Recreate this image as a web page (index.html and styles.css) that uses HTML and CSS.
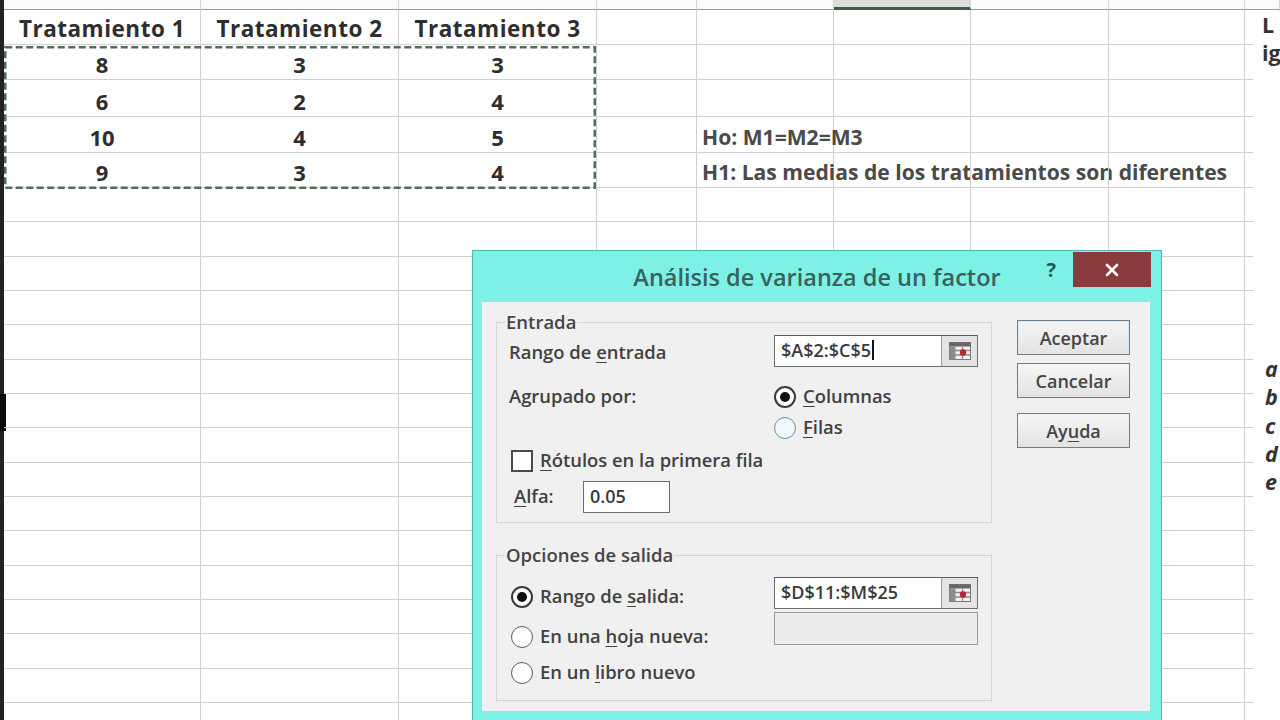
FILE: index.html
```html
<!DOCTYPE html>
<html lang="es">
<head>
<meta charset="utf-8">
<title>Análisis de varianza de un factor</title>
<link rel="stylesheet" href="styles.css">
</head>
<body>
<div class="sheet">
  <div class="edge"><div class="edge-mark"></div></div>
  <div class="grid">
    <!-- column headers -->
    <div class="h"></div><div class="h"></div><div class="h"></div><div class="h"></div><div class="h"></div><div class="h sel"></div><div class="h"></div><div class="h"></div><div class="h"></div>
    <!-- row 1 -->
    <div class="c b">Tratamiento 1</div><div class="c b">Tratamiento 2</div><div class="c b">Tratamiento 3</div><div class="c"></div><div class="c"></div><div class="c"></div><div class="c"></div><div class="c"></div><div class="c"></div>
    <!-- row 2 -->
    <div class="c b">8</div><div class="c b">3</div><div class="c b">3</div><div class="c"></div><div class="c"></div><div class="c"></div><div class="c"></div><div class="c"></div><div class="c"></div>
    <!-- row 3 -->
    <div class="c b">6</div><div class="c b">2</div><div class="c b">4</div><div class="c"></div><div class="c"></div><div class="c"></div><div class="c"></div><div class="c"></div><div class="c"></div>
    <!-- row 4 -->
    <div class="c b">10</div><div class="c b">4</div><div class="c b">5</div><div class="c"></div><div class="c t">Ho: M1=M2=M3</div><div class="c"></div><div class="c"></div><div class="c"></div><div class="c"></div>
    <!-- row 5 -->
    <div class="c b">9</div><div class="c b">3</div><div class="c b">4</div><div class="c"></div><div class="c t">H1: Las medias de los tratamientos son diferentes</div><div class="c"></div><div class="c"></div><div class="c"></div><div class="c"></div>
    <!-- empty rows -->
    <div class="c"></div><div class="c"></div><div class="c"></div><div class="c"></div><div class="c"></div><div class="c"></div><div class="c"></div><div class="c"></div><div class="c"></div>
    <div class="c"></div><div class="c"></div><div class="c"></div><div class="c"></div><div class="c"></div><div class="c"></div><div class="c"></div><div class="c"></div><div class="c"></div>
    <div class="c"></div><div class="c"></div><div class="c"></div><div class="c"></div><div class="c"></div><div class="c"></div><div class="c"></div><div class="c"></div><div class="c"></div>
    <div class="c"></div><div class="c"></div><div class="c"></div><div class="c"></div><div class="c"></div><div class="c"></div><div class="c"></div><div class="c"></div><div class="c"></div>
    <div class="c"></div><div class="c"></div><div class="c"></div><div class="c"></div><div class="c"></div><div class="c"></div><div class="c"></div><div class="c"></div><div class="c"></div>
    <div class="c"></div><div class="c"></div><div class="c"></div><div class="c"></div><div class="c"></div><div class="c"></div><div class="c"></div><div class="c"></div><div class="c"></div>
    <div class="c"></div><div class="c"></div><div class="c"></div><div class="c"></div><div class="c"></div><div class="c"></div><div class="c"></div><div class="c"></div><div class="c"></div>
    <div class="c"></div><div class="c"></div><div class="c"></div><div class="c"></div><div class="c"></div><div class="c"></div><div class="c"></div><div class="c"></div><div class="c"></div>
    <div class="c"></div><div class="c"></div><div class="c"></div><div class="c"></div><div class="c"></div><div class="c"></div><div class="c"></div><div class="c"></div><div class="c"></div>
    <div class="c"></div><div class="c"></div><div class="c"></div><div class="c"></div><div class="c"></div><div class="c"></div><div class="c"></div><div class="c"></div><div class="c"></div>
    <div class="c"></div><div class="c"></div><div class="c"></div><div class="c"></div><div class="c"></div><div class="c"></div><div class="c"></div><div class="c"></div><div class="c"></div>
    <div class="c"></div><div class="c"></div><div class="c"></div><div class="c"></div><div class="c"></div><div class="c"></div><div class="c"></div><div class="c"></div><div class="c"></div>
    <div class="c"></div><div class="c"></div><div class="c"></div><div class="c"></div><div class="c"></div><div class="c"></div><div class="c"></div><div class="c"></div><div class="c"></div>
    <div class="c"></div><div class="c"></div><div class="c"></div><div class="c"></div><div class="c"></div><div class="c"></div><div class="c"></div><div class="c"></div><div class="c"></div>
    <div class="c"></div><div class="c"></div><div class="c"></div><div class="c"></div><div class="c"></div><div class="c"></div><div class="c"></div><div class="c"></div><div class="c"></div>
    <div class="c"></div><div class="c"></div><div class="c"></div><div class="c"></div><div class="c"></div><div class="c"></div><div class="c"></div><div class="c"></div><div class="c"></div>
  </div>

  <!-- copy marquee around the data range -->
  <svg class="marquee" width="592" height="143" viewBox="0 0 592 143">
    <rect x="1.25" y="1.25" width="589.5" height="140.5" fill="none" stroke="#4f6d5b" stroke-width="2.5" stroke-dasharray="7 3.5"/>
  </svg>

  <!-- text box at the right edge -->
  <div class="note">
    <p class="note-head">L<br>ig</p>
    <ol class="note-list"><li>a</li><li>b</li><li>c</li><li>d</li><li>e</li></ol>
  </div>

  <!-- dialog -->
  <div class="dialog">
    <div class="titlebar">
      <div class="tb-side"></div>
      <div class="title">Análisis de varianza de un factor</div>
      <div class="tb-side tb-right">
        <span class="help">?</span>
        <span class="close"><svg width="16" height="16" viewBox="0 0 16 16"><path d="M3 3L13 13M13 3L3 13" stroke="#fff" stroke-width="2.6" stroke-linecap="round"/></svg></span>
      </div>
    </div>
    <div class="panel">
      <div class="groups">
        <fieldset class="group g1">
          <legend>Entrada</legend>
          <div class="frow r1">
            <span class="lbl">Rango de <u>e</u>ntrada</span>
            <div class="refedit"><span class="val">$A$2:$C$5<i class="caret"></i></span><span class="refbtn"><svg width="24" height="20" viewBox="0 0 24 20"><rect x="1.5" y="1.5" width="21" height="17" fill="#f2f2f2" stroke="#777"/><rect x="1.5" y="1.5" width="21" height="4" fill="#666"/><rect x="1.5" y="5.5" width="6" height="13" fill="#8c8c8c"/><path d="M1.5 9.5H22.5M1.5 14H22.5M14.5 5.5V18.5" stroke="#8a8a8a" stroke-width="1.3"/><circle cx="15" cy="11.5" r="3.2" fill="#c3232e"/></svg></span></div>
          </div>
          <div class="frow r2">
            <span class="lbl">Agrupado por:</span>
            <span class="opt"><i class="radio on"></i><span><u>C</u>olumnas</span></span>
          </div>
          <div class="frow r3">
            <span class="lbl"></span>
            <span class="opt"><i class="radio hover"></i><span><u>F</u>ilas</span></span>
          </div>
          <div class="frow r4">
            <span class="opt"><i class="check"></i><span><u>R</u>ótulos en la primera fila</span></span>
          </div>
          <div class="frow r5">
            <span class="lbl alfa"><u>A</u>lfa:</span>
            <span class="input alfa-in">0.05</span>
          </div>
        </fieldset>

        <fieldset class="group g2">
          <legend>Opciones de salida</legend>
          <div class="outrow">
            <div class="opts">
              <span class="opt o1"><i class="radio on"></i><span>Rango de <u>s</u>alida:</span></span>
              <span class="opt o2"><i class="radio"></i><span>En una <u>h</u>oja nueva:</span></span>
              <span class="opt o3"><i class="radio"></i><span>En un <u>l</u>ibro nuevo</span></span>
            </div>
            <div class="outs">
              <div class="refedit"><span class="val">$D$11:$M$25</span><span class="refbtn"><svg width="24" height="20" viewBox="0 0 24 20"><rect x="1.5" y="1.5" width="21" height="17" fill="#f2f2f2" stroke="#777"/><rect x="1.5" y="1.5" width="21" height="4" fill="#666"/><rect x="1.5" y="5.5" width="6" height="13" fill="#8c8c8c"/><path d="M1.5 9.5H22.5M1.5 14H22.5M14.5 5.5V18.5" stroke="#8a8a8a" stroke-width="1.3"/><circle cx="15" cy="11.5" r="3.2" fill="#c3232e"/></svg></span></div>
              <div class="input disabled"></div>
            </div>
          </div>
        </fieldset>
      </div>
      <div class="buttons">
        <button class="btn default">Aceptar</button>
        <button class="btn">Cancelar</button>
        <button class="btn help-btn">Ay<u>u</u>da</button>
      </div>
    </div>
  </div>
</div>
</body>
</html>
```

FILE: styles.css
```css
html, body {
  margin: 0;
  padding: 0;
}
body {
  width: 1280px;
  height: 720px;
  overflow: hidden;
  background: #ffffff;
  font-family: "Open Sans", "Noto Sans", sans-serif;
}

.sheet {
  position: relative;
  display: flex;
  width: 1280px;
  height: 720px;
}

.edge {
  flex: none;
  width: 4px;
  background: #222;
  display: flex;
  flex-direction: column;
}
.edge-mark {
  margin-top: 394px;
  width: 6px;
  height: 37px;
  background: #0a0a0a;
}

.grid {
  flex: 1;
  display: grid;
  grid-template-columns: 197px 198px 198px 100px 137px 137px 138px 136px 1fr;
  grid-template-rows: 10px 35px 35px 37px 36px 35px repeat(16, 34.35px);
}

.h {
  border-right: 1px solid #d6d6d6;
  border-bottom: 1px solid #9a9a9a;
  background: #fbfbfb;
}
.h.sel {
  background: #dcdcdc;
  border-bottom: 3px solid #3e5e49;
}

.c {
  border-right: 1px solid #d0d0d0;
  border-bottom: 1px solid #d0d0d0;
  display: flex;
  align-items: flex-end;
  justify-content: center;
  padding-bottom: 1px;
  white-space: nowrap;
  min-width: 0;
}
.c.b {
  font-weight: 700;
  font-size: 22px;
  color: #2e2e2e;
  line-height: 28px;
}
.c.b:nth-child(-n+13) {
  font-size: 22.5px;
  letter-spacing: 0.5px;
}
.c.t {
  justify-content: flex-start;
  padding-left: 5px;
  font-weight: 700;
  font-size: 21.1px;
  line-height: 28px;
  color: #4a4a4a;
  overflow: visible;
}

.marquee {
  position: absolute;
  left: 4px;
  top: 46px;
}

.note {
  position: absolute;
  left: 1253px;
  top: 11px;
  right: 0;
  bottom: 0;
  background: #fff;
  padding-left: 9px;
  font-weight: 700;
  font-size: 21.5px;
  line-height: 28px;
  color: #333;
  overflow: hidden;
}
.note-head {
  margin: 0;
}
.note-list {
  list-style: none;
  margin: 288px 0 0 3px;
  padding: 0;
  font-style: italic;
  line-height: 28.3px;
}

/* dialog */
.dialog {
  position: absolute;
  left: 472px;
  top: 250px;
  width: 690px;
  height: 480px;
  background: #7ef1e7;
  border: 1px solid #4fb9b0;
  padding: 0 11px 0 9px;
  box-sizing: border-box;
}
.titlebar {
  height: 51px;
  display: grid;
  grid-template-columns: 1fr auto 1fr;
  align-items: start;
  margin: 0 -11px 0 -9px;
}
.title {
  margin-top: 10px;
  font-size: 23.5px;
  line-height: 32px;
  font-weight: 600;
  color: #3a625d;
  white-space: nowrap;
}
.tb-right {
  display: flex;
  justify-content: flex-end;
  align-items: flex-start;
  padding-right: 10px;
}
.help {
  margin-top: 6px;
  margin-right: 17px;
  font-weight: 700;
  font-size: 20px;
  line-height: 26px;
  color: #2c5853;
}
.close {
  margin-top: 1px;
  width: 78px;
  height: 35px;
  background: #883a3d;
  display: flex;
  align-items: center;
  justify-content: center;
}

.panel {
  height: 409px;
  background: #f0f0f0;
  display: flex;
  padding: 10px 0 0 14px;
  box-sizing: border-box;
  font-size: 18.4px;
  font-weight: 600;
  color: #414141;
}
u {
  text-decoration-thickness: 1px;
  text-underline-offset: 3px;
}

.groups {
  width: 496px;
  display: flex;
  flex-direction: column;
}
.group {
  margin: 0;
  border: 1px solid #d6d6d6;
  padding: 0 13px 9px 12px;
  min-width: 0;
}
.group legend {
  padding: 0 1px;
  margin-left: -4px;
  font-size: 18.5px;
  line-height: 20px;
  color: #454545;
}
.g2 {
  margin-top: 22px;
  padding-bottom: 12px;
}

.frow {
  display: flex;
  align-items: center;
}
.lbl {
  width: 265px;
  flex: none;
  white-space: nowrap;
}
.lbl, .opt > span {
  padding-bottom: 3px;
}
.r1 .lbl {
  padding-bottom: 0;
}
.r1 { margin-top: 3px; height: 32px; }
.r2 { margin-top: 15px; height: 30px; }
.r3 { margin-top: 1px; height: 30px; }
.r4 { margin-top: 3px; height: 30px; margin-left: 2px; }
.r5 { margin-top: 5px; height: 32px; }
.lbl.alfa {
  width: 69px;
  margin-left: 5px;
}

.opt {
  display: flex;
  align-items: center;
  gap: 7px;
  white-space: nowrap;
}
.radio {
  width: 22px;
  height: 22px;
  box-sizing: border-box;
  border-radius: 50%;
  border: 1.5px solid #5e5e5e;
  background: #fff;
  display: flex;
  align-items: center;
  justify-content: center;
  flex: none;
}
.radio.on {
  border: 2px solid #3a3a3a;
}
.radio.on::after {
  content: "";
  width: 10px;
  height: 10px;
  border-radius: 50%;
  background: #111;
}
.radio.hover {
  border-color: #6f8fa3;
  background: #eef7fc;
}
.check {
  width: 22px;
  height: 22px;
  box-sizing: border-box;
  border: 2px solid #4a4a4a;
  background: #fff;
  flex: none;
}

.refedit {
  width: 204px;
  height: 32px;
  box-sizing: border-box;
  border: 1px solid #6e6e6e;
  border-top-color: #5a5a5a;
  background: #fff;
  display: flex;
  align-items: stretch;
}
.val {
  flex: 1;
  padding-left: 6px;
  padding-bottom: 2px;
  display: flex;
  align-items: center;
  color: #3a3a3a;
  font-size: 18px;
  white-space: nowrap;
}
.caret {
  width: 1.5px;
  height: 20px;
  background: #111;
  margin-left: 1px;
}
.refbtn {
  width: 35px;
  background: #e4e4e4;
  border-left: 1px solid #9c9c9c;
  display: flex;
  align-items: center;
  justify-content: center;
}

.input {
  height: 32px;
  box-sizing: border-box;
  border: 1px solid #6e6e6e;
  background: #fff;
  display: flex;
  align-items: center;
  padding-left: 6px;
  padding-bottom: 2px;
  color: #3a3a3a;
  font-size: 18px;
}
.alfa-in {
  width: 87px;
}
.input.disabled {
  width: 204px;
  height: 33px;
  margin-top: 3px;
  background: #ececec;
  border-color: #9a9a9a;
}

.outrow {
  display: flex;
}
.opts {
  width: 265px;
  flex: none;
  display: flex;
  flex-direction: column;
  margin-left: 2px;
  margin-right: -2px;
}
.opts .opt {
  height: 30px;
}
.o1 { margin-top: 17px; }
.o2 { margin-top: 10px; }
.o3 { margin-top: 6px; }
.outs {
  margin-top: 12px;
  display: flex;
  flex-direction: column;
}

.buttons {
  margin-left: 25px;
  margin-top: 8px;
  display: flex;
  flex-direction: column;
}
.btn {
  width: 113px;
  height: 35px;
  border: 1px solid #7a7a7a;
  background: linear-gradient(#f6f6f6, #e3e3e3);
  font-family: "Open Sans", "Noto Sans", sans-serif;
  font-size: 18px;
  font-weight: 600;
  color: #454545;
  padding: 0;
  margin: 0;
}
.btn.default {
  border-color: #6d7f8c;
  box-shadow: inset 0 0 0 1px #dde8ee;
}
.btn + .btn {
  margin-top: 8px;
}
.btn.help-btn {
  margin-top: 15px;
}
```
